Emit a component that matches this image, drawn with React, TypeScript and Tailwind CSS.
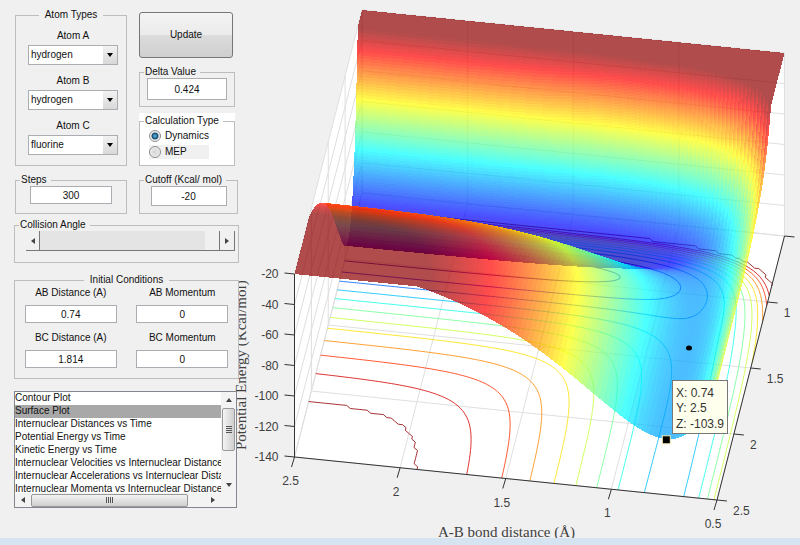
import React, { useMemo, useState } from 'react';

type Point = [number, number];

const PLOTS = [
  'Contour Plot',
  'Surface Plot',
  'Internuclear Distances vs Time',
  'Potential Energy vs Time',
  'Kinetic Energy vs Time',
  'Internuclear Velocities vs Internuclear Distance',
  'Internuclear Accelerations vs Internuclear Distance',
  'Internuclear Momenta vs Internuclear Distance',
];

const ATOMS = ['hydrogen', 'fluorine', 'chlorine'];

// Morse parameters: well depth (kcal/mol), range (1/A), bond length (A)
const HH = { d: 103.6, a: 1.975, r: 0.7419 };
const HF = { d: 135.4, a: 2.256, r: 0.9168 };
const SATO = 0.167;

const Z_MIN = -140;
const Z_MAX = -20;
const STEPS = 100;
const LEVELS = [-20, -30, -40, -50, -60, -70, -80, -90, -100, -110, -120, -130];

function pair(m: typeof HH, r: number) {
  const e = Math.exp(-m.a * (r - m.r));
  const singlet = m.d * (e * e - 2 * e) * (1 + SATO);
  const triplet = (m.d / 2) * (e * e + 2 * e) * (1 - SATO);
  return { q: (singlet + triplet) / 2, j: (singlet - triplet) / 2 };
}

// LEPS energy of the collinear A-B-C system, cut off at Z_MAX
function energy(ab: number, bc: number) {
  const p = pair(HH, ab);
  const q = pair(HF, bc);
  const r = pair(HF, ab + bc);
  const exchange = Math.sqrt(((p.j - q.j) ** 2 + (q.j - r.j) ** 2 + (r.j - p.j) ** 2) / 2);
  return Math.min(Z_MAX, (p.q + q.q + r.q - exchange) / (1 + SATO));
}

function project(x: number, y: number, z: number): Point {
  return [
    294.5 + (2.5 - x) * 211.25 + (2.5 - y) * 33.75,
    457 + (2.5 - x) * 21.5 - (2.5 - y) * 132 - (z - Z_MIN) * 1.525,
  ];
}

function jet(z: number) {
  const t = Math.max(0, Math.min(0.984, (z + 136) / 116));
  const channel = (c: number) => Math.round(255 * Math.max(0, Math.min(1, 1.5 - Math.abs(4 * t - c))));
  return `rgb(${channel(3)},${channel(2)},${channel(1)})`;
}

const at = (i: number) => 0.5 + (2 * i) / STEPS;
const fmt = (p: Point) => `${p[0].toFixed(3)} ${p[1].toFixed(3)}`;
const line = (a: Point, b: Point) => `M${fmt(a)}L${fmt(b)}`;

function buildGrid() {
  const grid: number[][] = [];
  for (let i = 0; i <= STEPS; i++) {
    grid.push([]);
    for (let j = 0; j <= STEPS; j++) grid[i].push(energy(at(i), at(j)));
  }
  return grid;
}

// Marching squares on the floor of the box
function contour(grid: number[][], level: number) {
  let d = '';
  for (let i = 0; i < STEPS; i++) {
    for (let j = 0; j < STEPS; j++) {
      const c = [[i, j], [i + 1, j], [i + 1, j + 1], [i, j + 1]];
      const hits: Point[] = [];
      for (let k = 0; k < 4; k++) {
        const [ai, aj] = c[k];
        const [bi, bj] = c[(k + 1) % 4];
        const va = grid[ai][aj];
        const vb = grid[bi][bj];
        if (va >= level !== vb >= level) {
          const t = (level - va) / (vb - va);
          hits.push(project(at(ai + (bi - ai) * t), at(aj + (bj - aj) * t), Z_MIN));
        }
      }
      for (let k = 0; k + 1 < hits.length; k += 2) d += line(hits[k], hits[k + 1]);
    }
  }
  return d;
}

// Quads sorted from the far corner to the near one; steep rows are cut into
// bands along BC so that the colour runs smoothly down the walls
function facets(grid: number[][]) {
  const out: { d: string; fill: string }[] = [];
  for (let j = 0; j < STEPS; j++) {
    const drop = Math.max(...grid.map((column) => Math.abs(column[j] - column[j + 1])));
    const bands = Math.max(1, Math.ceil(drop / 2));
    const z = (a: number, t: number) => grid[a][j] + (grid[a][j + 1] - grid[a][j]) * t;
    for (let i = STEPS - 1; i >= 0; i--) {
      for (let k = 0; k < bands; k++) {
        const t0 = k / bands;
        const t1 = (k + 1) / bands;
        const pts = [
          project(at(i), at(j + t0), z(i, t0)),
          project(at(i + 1), at(j + t0), z(i + 1, t0)),
          project(at(i + 1), at(j + t1), z(i + 1, t1)),
          project(at(i), at(j + t1), z(i, t1)),
        ];
        const mid = (t0 + t1) / 2;
        out.push({ d: `M${pts.map(fmt).join('L')}Z`, fill: jet((z(i, mid) + z(i + 1, mid)) / 2) });
      }
    }
  }
  return out;
}

function gridLines() {
  let d = '';
  for (const v of [0.5, 1, 1.5, 2, 2.5]) {
    d += line(project(v, 2.5, Z_MIN), project(v, 0.5, Z_MIN));
    d += line(project(v, 0.5, Z_MIN), project(v, 0.5, Z_MAX));
    d += line(project(2.5, v, Z_MIN), project(0.5, v, Z_MIN));
    d += line(project(2.5, v, Z_MIN), project(2.5, v, Z_MAX));
  }
  for (let z = Z_MIN; z <= Z_MAX; z += 20) {
    d += line(project(2.5, 2.5, z), project(2.5, 0.5, z));
    d += line(project(2.5, 0.5, z), project(0.5, 0.5, z));
  }
  return d;
}

function SurfacePlot() {
  const grid = useMemo(buildGrid, []);
  const quads = useMemo(() => facets(grid), [grid]);
  const lines = useMemo(() => LEVELS.map((z) => ({ d: contour(grid, z), stroke: jet(z) })), [grid]);
  const box = [
    project(2.5, 2.5, Z_MIN),
    project(0.5, 2.5, Z_MIN),
    project(0.5, 0.5, Z_MIN),
    project(0.5, 0.5, Z_MAX),
    project(2.5, 0.5, Z_MAX),
    project(2.5, 2.5, Z_MAX),
  ];
  const marker = project(0.74, 2.5, -103.9);

  return (
    <svg
      viewBox="238 0 562 538"
      className="block w-full overflow-visible font-['Liberation_Sans',sans-serif] text-[12px]"
      role="img"
      aria-label="Potential energy surface"
    >
      <path d={`M${box.map(fmt).join('L')}Z`} fill="#fff" />
      <path d={gridLines()} fill="none" stroke="#dfdfdf" />
      {lines.map((l) => (
        <path key={l.stroke} d={l.d} fill="none" stroke={l.stroke} strokeOpacity={0.8} />
      ))}
      <g fillOpacity={0.7} shapeRendering="crispEdges">
        {quads.map((q, i) => (
          <path key={i} d={q.d} fill={q.fill} />
        ))}
      </g>

      {/* Axes */}
      <path
        d={`M${fmt(box[5])}L${fmt(box[0])}L${fmt(box[1])}L${fmt(box[2])}`}
        fill="none"
        stroke="#333"
      />
      <g stroke="#333" fill="#404040">
        {[-20, -40, -60, -80, -100, -120, -140].map((z) => {
          const [x, y] = project(2.5, 2.5, z);
          return (
            <g key={z}>
              <path d={`M${x} ${y}l-10 -1`} />
              <text x={x - 16} y={y + 4} textAnchor="end" stroke="none">{z}</text>
            </g>
          );
        })}
        {[2.5, 2, 1.5, 1, 0.5].map((v) => {
          const [x, y] = project(v, 2.5, Z_MIN);
          return (
            <g key={v}>
              <path d={`M${x} ${y}l-3 10`} />
              <text x={x - 4} y={y + 28} textAnchor="middle" stroke="none">{v}</text>
            </g>
          );
        })}
        {[0.5, 1, 1.5, 2, 2.5].map((v) => {
          const [x, y] = project(0.5, v, Z_MIN);
          return (
            <g key={v}>
              <path d={`M${x} ${y}l10 1`} />
              {v > 0.5 && <text x={x + 16} y={y + 15} stroke="none">{v}</text>}
            </g>
          );
        })}
      </g>
      <g className="font-['Liberation_Serif',serif] text-[15px]" fill="#404040">
        <text x="438" y="537">A-B bond distance (Å)</text>
        <text transform="translate(246 450) rotate(-90)">Potential Energy (Kcal/mol)</text>
      </g>

      {/* Trajectory point and data tip */}
      <ellipse cx="689" cy="348" rx="3" ry="2.5" />
      <rect x={marker[0] - 4} y={marker[1] - 4} width="8" height="8" fill="#000" stroke="#f5f0b8" />
      <rect x="672.5" y="380.5" width="55" height="53" fill="#ffffee" stroke="#777" />
      <g fill="#333">
        <text x="676" y="397">X: 0.74</text>
        <text x="676" y="412">Y: 2.5</text>
        <text x="676" y="428">Z: -103.9</text>
      </g>
    </svg>
  );
}

interface GroupProps {
  title: string;
  center?: boolean;
  className?: string;
  children: React.ReactNode;
}

function Group({ title, center, className = '', children }: GroupProps) {
  return (
    <fieldset className={`min-w-0 border border-[#bdbdbd] ${className}`}>
      <legend className={`h-3 ${center ? 'mx-auto px-1.5' : 'ml-1 pl-px pr-1'}`}>{title}</legend>
      {children}
    </fieldset>
  );
}

function AtomSelect({ label, value }: { label: string; value: string }) {
  return (
    <label className="flex flex-col items-center gap-[3px]">
      <span className="h-3">{label}</span>
      <span className="relative block h-5 w-[90px]">
        <select
          defaultValue={value}
          className="h-5 w-full appearance-none border border-[#abadb3] bg-white pl-[2px] text-[10px]"
        >
          {ATOMS.map((a) => (
            <option key={a}>{a}</option>
          ))}
        </select>
        <span className="pointer-events-none absolute inset-y-px right-px flex w-[14px] items-center justify-center bg-gradient-to-b from-[#f2f2f2] to-[#d8d8d8]">
          <svg viewBox="0 0 6 4" className="h-1 w-1.5">
            <path d="M0 0h6L3 4z" />
          </svg>
        </span>
      </span>
    </label>
  );
}

const INPUT = 'border border-[#abadb3] bg-white text-center text-[10px]';

function Field({ label, value }: { label: string; value: string }) {
  return (
    <label className="flex flex-col items-center gap-[6px]">
      <span className="h-3">{label}</span>
      <input defaultValue={value} className={`h-[18px] w-[92px] ${INPUT}`} />
    </label>
  );
}

function Radio({ label, checked, onChange }: { label: string; checked: boolean; onChange: () => void }) {
  return (
    <label className={`flex h-[14px] w-[60px] items-center gap-1 ${checked ? '' : 'bg-[#f0f0f0]'}`}>
      <input
        type="radio"
        name="calculation"
        checked={checked}
        onChange={onChange}
        className="size-3 appearance-none rounded-full border border-[#8e8f8f] bg-[radial-gradient(#d5d5d5,#f4f4f4)] checked:bg-[radial-gradient(circle,#5cc0ea_0,#174a6e_3px,#f0f0f0_4px)]"
      />
      {label}
    </label>
  );
}

function Arrow({ d }: { d: string }) {
  return (
    <svg viewBox="0 0 6 6" className="size-1.5">
      <path d={d} fill="#444" />
    </svg>
  );
}

const LEFT = 'M5 0v6L1 3z';
const RIGHT = 'M1 0v6L5 3z';
const UP = 'M0 5h6L3 1z';
const DOWN = 'M0 1h6L3 5z';

export default function App() {
  const [mode, setMode] = useState('Dynamics');
  const [plot, setPlot] = useState('Surface Plot');

  return (
    <div className="flex min-h-screen flex-col bg-[#f0f0f0] font-['Liberation_Sans',sans-serif] text-[10px] leading-3 text-[#111]">
      <main className="flex flex-1 items-start">
        <form className="relative z-10 -mr-px w-[239px] shrink-0 pl-[14px]" onSubmit={(e) => e.preventDefault()}>
          <div className="flex gap-3 pl-px pt-[9px]">
            <Group title="Atom Types" center className="w-[112px] pb-[9px]">
              <div className="flex flex-col gap-[10px] pl-1 pt-[9px]">
                <AtomSelect label="Atom A" value="hydrogen" />
                <AtomSelect label="Atom B" value="hydrogen" />
                <AtomSelect label="Atom C" value="fluorine" />
              </div>
            </Group>
            <div className="flex w-[96px] flex-col pt-[3px]">
              <button
                type="button"
                className="h-[46px] w-[94px] rounded-[3px] border border-[#777] bg-[linear-gradient(#f3f3f3_0%,#ebebeb_50%,#dcdcdc_50%,#cfcfcf_100%)]"
              >
                Update
              </button>
              <Group title="Delta Value" className="mt-2 h-[41px]">
                <input aria-label="Delta Value" defaultValue="0.424" className={`mx-auto block h-[22px] w-[80px] ${INPUT}`} />
              </Group>
              <div className="mt-[6px] bg-white pt-[2px]">
                <Group title="Calculation Type" className="h-[51px]">
                  <div className="flex flex-col gap-[2px] pl-[9px] pt-[2px]">
                    {['Dynamics', 'MEP'].map((m) => (
                      <Radio key={m} label={m} checked={mode === m} onChange={() => setMode(m)} />
                    ))}
                  </div>
                </Group>
              </div>
            </div>
          </div>

          <div className="mt-2 flex gap-3 pl-px">
            <Group title="Steps" className="h-10 w-[112px]">
              <input aria-label="Steps" defaultValue="300" className={`mx-auto block h-[18px] w-[82px] ${INPUT}`} />
            </Group>
            <Group title="Cutoff (Kcal/ mol)" className="h-10 w-[99px]">
              <input aria-label="Cutoff" defaultValue="-20" className={`mx-auto block h-5 w-[76px] ${INPUT}`} />
            </Group>
          </div>

          <Group title="Collision Angle" className="mt-[5px] h-11">
            <div className="ml-[11px] flex h-5 w-[209px] border-b border-[#777]">
              <button type="button" aria-label="Decrease" className="flex w-[14px] items-center justify-center border-r border-[#777]">
                <Arrow d={LEFT} />
              </button>
              <input
                type="range"
                aria-label="Collision Angle"
                min="0"
                max="180"
                defaultValue="180"
                className="h-full min-w-0 flex-1 appearance-none bg-[#e4e4e4] [&::-webkit-slider-thumb]:h-[19px] [&::-webkit-slider-thumb]:w-[15px] [&::-webkit-slider-thumb]:appearance-none [&::-webkit-slider-thumb]:border-r [&::-webkit-slider-thumb]:border-[#777] [&::-webkit-slider-thumb]:bg-[#f0f0f0]"
              />
              <button type="button" aria-label="Increase" className="flex w-[15px] items-center justify-center border-r border-[#777]">
                <Arrow d={RIGHT} />
              </button>
            </div>
          </Group>

          <Group title="Initial Conditions" center className="mt-[11px] h-[105px] bg-[#f0f0f0]">
            <div className="grid grid-cols-2 gap-y-[9px] pt-px">
              <Field label="AB Distance (A)" value="0.74" />
              <Field label="AB Momentum" value="0" />
              <Field label="BC Distance (A)" value="1.814" />
              <Field label="BC Momentum" value="0" />
            </div>
          </Group>

          <div className="mt-3 grid w-[223px] grid-cols-[1fr_15px] border border-[#828790] bg-white">
            <select
              size={8}
              aria-label="Plot"
              value={plot}
              onChange={(e) => setPlot(e.target.value)}
              className="h-[101px] w-full appearance-none overflow-hidden bg-white text-[10px]"
            >
              {PLOTS.map((p) => (
                <option
                  key={p}
                  className="h-[13px] min-h-0 p-0 leading-[13px] text-[#111] checked:bg-[linear-gradient(#a8a8a8,#a8a8a8)]"
                >
                  {p}
                </option>
              ))}
            </select>
            <div className="flex flex-col items-center justify-between bg-[#f3f3f3]">
              <span className="flex h-4 items-center"><Arrow d={UP} /></span>
              <span className="mb-auto flex h-[43px] w-[13px] flex-col items-center justify-center gap-px rounded-[2px] border border-[#999] bg-gradient-to-r from-[#f4f4f4] to-[#cfcfcf]">
                <i className="h-px w-1.5 bg-[#555]" />
                <i className="h-px w-1.5 bg-[#555]" />
                <i className="h-px w-1.5 bg-[#555]" />
                <i className="h-px w-1.5 bg-[#555]" />
              </span>
              <span className="flex h-4 items-center"><Arrow d={DOWN} /></span>
            </div>
            <div className="flex h-[14px] items-center justify-between bg-[#f3f3f3]">
              <span className="flex w-4 justify-center"><Arrow d={LEFT} /></span>
              <span className="mr-auto flex h-[13px] w-[157px] items-center justify-center gap-px rounded-[2px] border border-[#999] bg-gradient-to-b from-[#f4f4f4] to-[#cfcfcf]">
                <i className="h-1.5 w-px bg-[#555]" />
                <i className="h-1.5 w-px bg-[#555]" />
                <i className="h-1.5 w-px bg-[#555]" />
                <i className="h-1.5 w-px bg-[#555]" />
              </span>
              <span className="flex w-4 justify-center"><Arrow d={RIGHT} /></span>
            </div>
            <div className="bg-[#f3f3f3]" />
          </div>
        </form>

        <div className="min-w-0 flex-1">
          <SurfacePlot />
        </div>
      </main>
      <footer className="h-[7px] bg-[#d6e4f2]" />
    </div>
  );
}
